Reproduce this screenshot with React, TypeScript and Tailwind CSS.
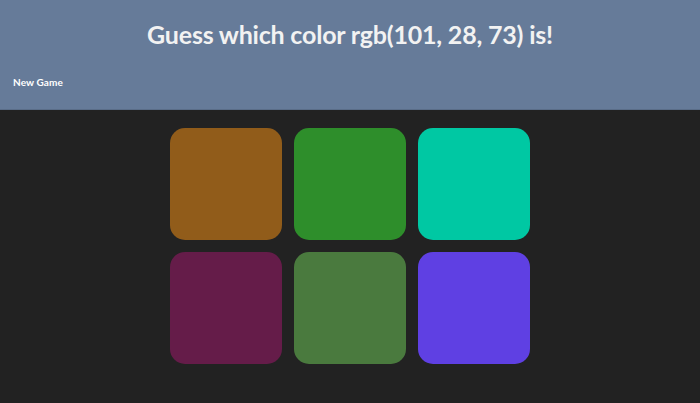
import React from "react";

const colors = ["#915c1a", "#2e8e2b", "#00c8a3", "#651c49", "#4a7a3e", "#5f40e3"];

export default function App() {
  return (
    <div className="min-h-[403px] bg-[#222222]" style={{ fontFamily: "Lato, 'Noto Sans', sans-serif" }}>
      <header className="h-[110px] bg-[#667b99] flex flex-col border-b border-[#5a6d88]">
        <h1 className="text-[25px] font-bold text-[#f2f2f2] text-center pt-[16px] leading-[36px] tracking-[-0.2px]">
          Guess which color rgb(101, 28, 73) is!
        </h1>
        <div className="pl-[13px] pt-[16px]">
          <button className="text-[10px] font-bold text-white leading-[14px] tracking-[0.1px]">New Game</button>
        </div>
      </header>
      <main className="flex justify-center pt-[18px]">
        <div className="grid grid-cols-[112px_112px_112px] gap-[12px]">
          {colors.map((c, i) => (
            <div key={i} className="w-[112px] h-[112px] rounded-[15px]" style={{ backgroundColor: c }} />
          ))}
        </div>
      </main>
    </div>
  );
}
